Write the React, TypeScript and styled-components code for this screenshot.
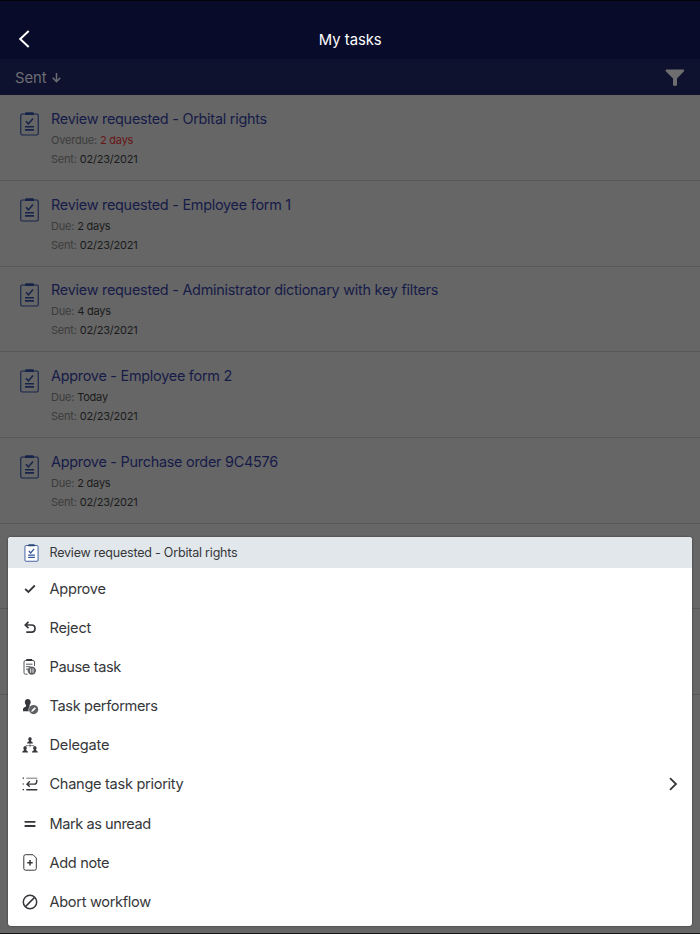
import React from "react";
import styled, { createGlobalStyle } from "styled-components";

const GlobalStyle = createGlobalStyle`
  * { box-sizing: border-box; }
  body { margin: 0; font-family: Inter, "Liberation Sans", sans-serif; }
`;

const Screen = styled.div`
  position: relative;
  width: 700px;
  height: 934px;
  overflow: hidden;
  background: #666;
  border-top: 1px solid #030409;
  border-bottom: 1px solid #171419;
`;

const Header = styled.header`
  display: grid;
  grid-template-columns: 48px 1fr 48px;
  align-items: center;
  height: 58px;
  padding-top: 18px;
  background: #080c2a;
  color: #fff;
`;

const BackButton = styled.button`
  display: flex;
  padding: 0 0 0 18px;
  border: 0;
  background: none;
  color: inherit;
`;

const Title = styled.h1`
  margin: 0;
  padding-top: 2px;
  padding-left: 0.5px;
  font-size: 14.8px;
  font-weight: 400;
  letter-spacing: 0;
  line-height: 20px;
  text-align: center;
`;

const SortBar = styled.div`
  display: flex;
  align-items: center;
  justify-content: space-between;
  height: 36.4px;
  padding: 1px 15px 0;
  background: #0e122e;
  color: #6c6d74;
`;

const SortLabel = styled.div`
  display: flex;
  align-items: center;
  gap: 5px;
  font-size: 14.8px;
`;

const TaskRow = styled.article`
  display: flex;
  height: 85.67px;
  padding: 14.6px 0 0 20px;
  gap: 12px;
  border-bottom: 1px solid #585858;
`;

const TaskIcon = styled.div`
  width: 19px;
  padding-top: 2px;
  color: #17244a;
`;

const TaskTitle = styled.h2`
  margin: 0 0 3px;
  font-size: 14.4px;
  font-weight: 400;
  line-height: 18px;
  letter-spacing: -0.245px;
  color: #161b48;
  white-space: nowrap;
`;

const Meta = styled.p`
  margin: 0;
  font-size: 11px;
  line-height: 19px;
  letter-spacing: -0.2px;
  color: #3c3c3c;
`;

const Value = styled.span<{ $late?: boolean }>`
  color: ${(p) => (p.$late ? "#681515" : "#1b1b1b")};
`;

const Sheet = styled.section`
  position: absolute;
  left: 8px;
  right: 8px;
  top: 536px;
  height: 389px;
  overflow: hidden;
  border-radius: 3px;
  background: #fff;
  color: #36373a;
  box-shadow: 0 0 2px rgba(0, 0, 0, 0.6);
`;

const SheetHeader = styled.div`
  display: flex;
  align-items: center;
  height: 31px;
  padding-left: 12px;
  background: #e1e7eb;
  font-size: 12.5px;
`;

const Action = styled.div`
  display: flex;
  align-items: center;
  height: 39.17px;
  padding: 0 13px 0 11px;
  font-size: 14.6px;
`;

const ActionList = styled.div`
  padding-top: 1px;
`;

const IconSlot = styled.span<{ $wide?: boolean }>`
  display: flex;
  justify-content: center;
  width: 22px;
  margin-right: ${(p) => (p.$wide ? 8.5 : 7.5)}px;
`;

const Label = styled.span<{ $spacing: number }>`
  flex: 1;
  letter-spacing: ${(p) => p.$spacing}px;
`;

const Clipboard = ({ width, height }: { width: number; height: number }) => (
  <svg width={width} height={height} viewBox="0 0 19 24" fill="none" stroke="currentColor">
    <rect x=".75" y="2" width="17.5" height="21" rx="1.5" strokeWidth="1.1" />
    <path d="M5 1.5Q5 .3 6.5 .3h6q1.5 0 1.5 1.2V3H5z" fill="currentColor" stroke="none" />
    <path d="m6 9.3 2.4 2.6 4.6-5.4M5 14.7h9M5 17.9h9" strokeWidth="1.6" />
  </svg>
);

const person = (x: number, y: number) => (
  <path
    transform={`translate(${x} ${y})`}
    d="M2.9 0C4.9 0 5 2.6 3.9 3.5V4Q5.8 4.3 5.8 6.1H0Q0 4.3 1.9 4V3.5C.8 2.6 .9 0 2.9 0Z"
  />
);

const icons = {
  approve: (
    <svg width="12" height="10" viewBox="0 0 12 10" fill="none" stroke="currentColor" strokeWidth="1.8">
      <path d="m1.2 5 3.2 3L10.8 1.5" />
    </svg>
  ),
  reject: (
    <svg width="12" height="13" viewBox="0 0 12 13" fill="none" stroke="currentColor" strokeWidth="1.7">
      <path d="M4.5 .9 1.3 4l3.2 3.1M1.4 4h6.2q3.4 0 3.4 3.6t-3.4 3.6H2.3" />
    </svg>
  ),
  pause: (
    <svg width="14" height="18" viewBox="0 0 14 18" fill="none" stroke="#55565a">
      <path d="M4.5 16.2h-2Q1 16.2 1 14.7V4Q1 2.5 2.5 2.5h7.5Q11.5 2.5 11.5 4v4" />
      <path d="M3 6.2h6.5M3 8.7h4.5M3 11.2h2" />
      <path d="M3.2 1h6v2h-6z" fill="#303134" stroke="none" />
      <circle cx="8.8" cy="12.6" r="4.2" fill="#606165" stroke="none" />
      <path d="M7.7 10.5v4.2m2.3-4.2v4.2" stroke="#fff" strokeWidth=".9" />
    </svg>
  ),
  performers: (
    <svg width="17" height="17" viewBox="0 0 17 17">
      <path
        d="M5.8 1C9.3 1 9.3 5.4 7.6 7v1.4L10 9v4.3H1Q.7 9.8 2.5 9.2L4 8.4V7C2.3 5.4 2.3 1 5.8 1Z"
        fill="currentColor"
      />
      <circle cx="11.6" cy="11.6" r="5.1" fill="#fff" />
      <circle cx="11.6" cy="11.6" r="4.6" fill="#606165" />
      <path d="m9.3 13.9.5-1.9 2.9-2.8 1.2 1.2-2.8 2.9z" fill="#fff" />
    </svg>
  ),
  delegate: (
    <svg width="16" height="16" viewBox="0 0 16 16" fill="currentColor">
      {person(5.1, 0.3)}
      {person(0.2, 9.3)}
      {person(10, 9.3)}
      <path d="M8 6v4.2M4 9.6V8.6h8v1" fill="none" stroke="currentColor" strokeWidth=".6" />
    </svg>
  ),
  priority: (
    <svg width="16" height="14" viewBox="0 0 16 14" fill="none" stroke="currentColor">
      <path d="M4.3 1.2H15.3" stroke="#777" />
      <path d="M4.3 12.7H15.3" strokeWidth="1.5" />
      <path d="M.6 1.2H2M.6 7H2M.6 12.7H2" strokeWidth="1.2" />
      <path d="M14.7 2.7v2q0 2.4-2.4 2.4H5M7.8 4.2 5 7.1l2.8 2.6" strokeWidth="1.4" />
    </svg>
  ),
  unread: (
    <svg width="12" height="8" viewBox="0 0 12 8" stroke="currentColor" strokeWidth="1.8">
      <path d="M.6 1.8h10.8M.6 6h10.8" />
    </svg>
  ),
  note: (
    <svg width="14" height="17" viewBox="0 0 14 17" fill="none" stroke="currentColor">
      <path d="M2.5.7H10L13.3 4v10.5q0 1.7-1.7 1.7H2.5Q.8 16.2.8 14.5V2.4Q.8.7 2.5.7Z" />
      <path d="M7 6v5.4M4.3 8.7h5.4" strokeWidth="1.5" />
    </svg>
  ),
  abort: (
    <svg width="16" height="16" viewBox="0 0 16 16" fill="none" stroke="currentColor" strokeWidth="1.5">
      <circle cx="8" cy="8" r="6.7" />
      <path d="m3.4 12.6 9.2-9.2" />
    </svg>
  ),
};

interface Task {
  title: string;
  due: string;
  late?: boolean;
}

const tasks: Task[] = [
  { title: "Review requested - Orbital rights", due: "2 days", late: true },
  { title: "Review requested - Employee form 1", due: "2 days" },
  { title: "Review requested - Administrator dictionary with key filters", due: "4 days" },
  { title: "Approve - Employee form 2", due: "Today" },
  { title: "Approve - Purchase order 9C4576", due: "2 days" },
];

const actions: { icon: keyof typeof icons; label: string; spacing: number; more?: boolean }[] = [
  { icon: "approve", label: "Approve", spacing: -0.27 },
  { icon: "reject", label: "Reject", spacing: -0.2 },
  { icon: "pause", label: "Pause task", spacing: -0.38 },
  { icon: "performers", label: "Task performers", spacing: -0.36 },
  { icon: "delegate", label: "Delegate", spacing: -0.2 },
  { icon: "priority", label: "Change task priority", spacing: -0.3, more: true },
  { icon: "unread", label: "Mark as unread", spacing: -0.45 },
  { icon: "note", label: "Add note", spacing: -0.35 },
  { icon: "abort", label: "Abort workflow", spacing: -0.33 },
];

export default function App() {
  return (
    <Screen>
      <GlobalStyle />
      <Header>
        <BackButton aria-label="Back">
          <svg width="12" height="18" viewBox="0 0 12 18" fill="none" stroke="currentColor" strokeWidth="2">
            <path d="M10.7 1 2.2 9l8.5 8" />
          </svg>
        </BackButton>
        <Title>My tasks</Title>
      </Header>
      <SortBar>
        <SortLabel>
          Sent
          <svg width="9" height="10" viewBox="0 0 9 10" fill="none" stroke="currentColor" strokeWidth="1.5">
            <path d="M4.5 0v8.5M.7 4.8l3.8 3.9 3.8-3.9" />
          </svg>
        </SortLabel>
        <svg width="20" height="18" viewBox="0 0 20 18" fill="#6e6e70">
          <path d="M1.3.5h17.2q1.3.3.5 1.7L12 9.5v6.8q-2 1.6-4 0V9.5L.8 2.2Q0 .8 1.3.5Z" />
        </svg>
      </SortBar>
      {tasks.map((task) => (
        <TaskRow key={task.title}>
          <TaskIcon>
            <Clipboard width={19} height={24} />
          </TaskIcon>
          <div>
            <TaskTitle>{task.title}</TaskTitle>
            <Meta>
              {task.late ? "Overdue: " : "Due: "}
              <Value $late={task.late}>{task.due}</Value>
            </Meta>
            <Meta>
              Sent: <Value>02/23/2021</Value>
            </Meta>
          </div>
        </TaskRow>
      ))}
      <TaskRow />
      <TaskRow />
      <Sheet>
        <SheetHeader>
          <IconSlot>
            <svg width="15" height="18" viewBox="0 0 19 24" fill="none" stroke="#34569a">
              <rect x=".75" y="2" width="17.5" height="21" rx="1.5" strokeWidth="1.2" fill="#fff" />
              <path d="M5 1.5Q5 .3 6.5 .3h6q1.5 0 1.5 1.2V3H5z" fill="#294779" stroke="none" />
              <path d="m6 9.3 2.4 2.6 4.6-5.4M5 14.7h9M5 17.9h9" strokeWidth="1.7" />
            </svg>
          </IconSlot>
          <Label $spacing={-0.2}>Review requested - Orbital rights</Label>
        </SheetHeader>
        <ActionList>
          {actions.map((action) => (
            <Action key={action.label}>
              <IconSlot $wide>{icons[action.icon]}</IconSlot>
              <Label $spacing={action.spacing}>{action.label}</Label>
              {action.more && (
                <svg width="12" height="14" viewBox="0 0 12 14" fill="none" stroke="currentColor" strokeWidth="1.8">
                  <path d="m3 1.2 6 5.8-6 5.8" />
                </svg>
              )}
            </Action>
          ))}
        </ActionList>
      </Sheet>
    </Screen>
  );
}
